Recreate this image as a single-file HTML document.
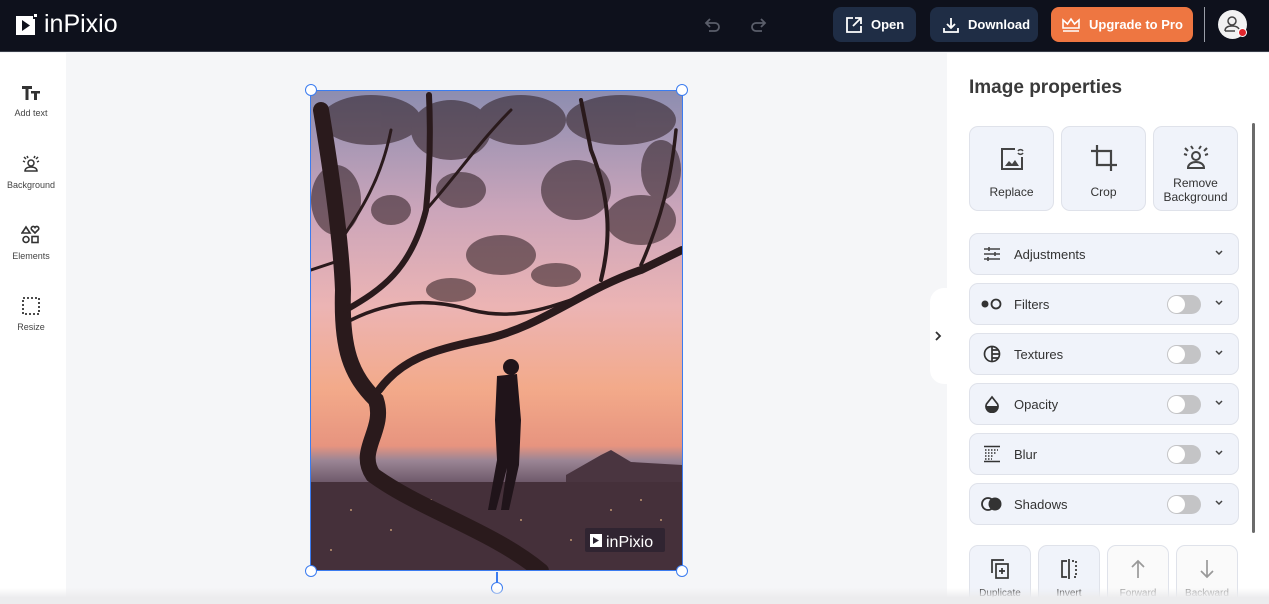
<!DOCTYPE html>
<html><head><meta charset="utf-8"><style>
*{margin:0;padding:0;box-sizing:border-box}
html,body{width:1269px;height:604px;overflow:hidden}
body{font-family:"Liberation Sans",sans-serif;background:#f5f6f8;position:relative}
.hdr{position:absolute;left:0;top:0;width:1269px;height:52px;background:#0e111c;border-bottom:1px solid #3a3f4a}
.logo{position:absolute;left:16px;top:10px;color:#fff;font-size:25px;display:flex;align-items:center;gap:6px}
.btn{position:absolute;top:7px;height:35px;border-radius:8px;color:#fff;font-weight:bold;font-size:13px;display:flex;align-items:center;gap:8px;padding-left:12px}
.side{position:absolute;left:0;top:53px;width:66px;height:551px;background:#fff}
.si{position:absolute;left:0;width:62px;text-align:center;font-size:9px;color:#444}
.si svg{display:block;margin:0 auto 6px}
.panel{position:absolute;left:947px;top:53px;width:322px;height:551px;background:#fff;overflow:hidden}
h1{position:absolute;left:22px;top:24px;font-size:19px;color:#3a3a3a;font-weight:bold}
.card{position:absolute;background:#f0f3fa;border:1px solid #dfe2ea;border-radius:9px}
.tc{top:73px;width:85px;height:85px;text-align:center;font-size:12px;color:#333}
.row{left:22px;width:270px;height:42px;display:flex;align-items:center;font-size:13px;color:#333}
.row .ic{width:44px;display:flex;justify-content:center}
.tog{position:absolute;left:197px;top:11px;width:34px;height:19px;border-radius:10px;background:#c4c4c6}
.tog:after{content:"";position:absolute;left:1px;top:1px;width:17px;height:17px;border-radius:50%;background:#fff}
.chev{position:absolute;left:244px;top:15px}
.bc{top:492px;width:62px;height:70px;text-align:center;font-size:10px;color:#333}
.h{position:absolute;width:12px;height:12px;border:1.5px solid #3b7cf0;border-radius:50%;background:#fff}
</style></head><body>
<div class="hdr">
 <div class="logo"><svg width="22" height="22" viewBox="0 0 22 22"><rect x="0" y="2" width="19" height="19" fill="#fff"/><rect x="17" y="0" width="5" height="5" fill="#0e111c"/><rect x="18" y="0" width="3" height="3" fill="#fff"/><path d="M6 6 L14 11.5 L6 17Z" fill="#0e111c"/></svg><span>inPixio</span></div>
 <svg style="position:absolute;left:703px;top:15px" width="20" height="20" viewBox="0 0 20 20" fill="none" stroke="#5a5e6a" stroke-width="1.8"><path d="M7 4 L3 8 L7 12 M3 8 H12 a4 4 0 0 1 0 8 H6"/></svg>
 <svg style="position:absolute;left:748px;top:15px" width="20" height="20" viewBox="0 0 20 20" fill="none" stroke="#5a5e6a" stroke-width="1.8"><path d="M13 4 L17 8 L13 12 M17 8 H8 a4 4 0 0 0 0 8 H14"/></svg>
 <div class="btn" style="left:833px;width:83px;background:#1f2d45"><svg width="18" height="18" viewBox="0 0 18 18" fill="none" stroke="#fff" stroke-width="1.8"><path d="M8 2H2V16H16V10M10 2H16V8M16 2L8 10"/></svg>Open</div>
 <div class="btn" style="left:930px;width:108px;background:#1f2d45"><svg width="18" height="18" viewBox="0 0 18 18" fill="none" stroke="#fff" stroke-width="1.8"><path d="M9 2V12M5 8L9 12L13 8M2 12V16H16V12"/></svg>Download</div>
 <div class="btn" style="left:1051px;width:142px;background:#ee7641;padding-left:10px"><svg width="20" height="16" viewBox="0 0 20 16" fill="none" stroke="#fff" stroke-width="1.6"><path d="M2 11L2 3L6.5 7L10 2L13.5 7L18 3L18 11Z M2 14H18"/></svg>Upgrade to Pro</div>
 <div style="position:absolute;left:1204px;top:7px;width:1px;height:35px;background:#9a9ea8"></div>
 <div style="position:absolute;left:1218px;top:10px;width:29px;height:29px;border-radius:50%;background:#f2f2f2"><svg width="29" height="29" viewBox="0 0 29 29" fill="none" stroke="#444" stroke-width="1.5"><circle cx="14" cy="11" r="4"/><path d="M7 21c0-4 3-5 7-5s6 1 7 3M7 21H17"/></svg><div style="position:absolute;left:20px;top:18px;width:9px;height:9px;border-radius:50%;background:#e0262c;border:1.5px solid #fff"></div></div>
</div>
<div class="side">
 <div class="si" style="top:31px"><svg width="20" height="18" viewBox="0 0 20 18" fill="#333"><path d="M1 2H11V5H7.5V16H4.5V5H1Z M10 7H19V9.5H16V16H13V9.5H10Z"/></svg>Add text</div>
 <div class="si" style="top:101px"><svg width="20" height="20" viewBox="0 0 20 20" fill="none" stroke="#333" stroke-width="1.5"><circle cx="10" cy="9" r="3"/><path d="M4 17c0-3 3-4 6-4s6 1 6 4Z M3 3l2 2M6 2l1 2M14 2l-1 2M17 3l-2 2M2 7l2 1M18 7l-2 1"/></svg>Background</div>
 <div class="si" style="top:172px"><svg width="20" height="20" viewBox="0 0 20 20" fill="none" stroke="#333" stroke-width="1.6"><path d="M5 2L9 8H1Z M14 8l-3.5-3.5a2 2 0 0 1 3.5-2a2 2 0 0 1 3.5 2Z"/><circle cx="5" cy="14.5" r="3"/><rect x="11" y="11.5" width="6" height="6"/></svg>Elements</div>
 <div class="si" style="top:243px"><svg width="20" height="20" viewBox="0 0 20 20" fill="none" stroke="#333" stroke-width="1.8" stroke-dasharray="2 2"><rect x="2" y="2" width="16" height="16"/></svg>Resize</div>
</div>

<svg style="position:absolute;left:311px;top:90px" width="371" height="481" viewBox="0 0 371 481">
 <defs><linearGradient id="sky" x1="0" y1="0" x2="0" y2="1">
  <stop offset="0" stop-color="#8c8db0"/><stop offset="0.25" stop-color="#cba5ba"/><stop offset="0.45" stop-color="#ecb4b4"/><stop offset="0.62" stop-color="#f3aa8a"/><stop offset="0.74" stop-color="#e7947f"/><stop offset="0.77" stop-color="#9b8595"/><stop offset="0.82" stop-color="#6a5566"/><stop offset="1" stop-color="#3a2630"/></linearGradient></defs>
 <rect width="371" height="481" fill="url(#sky)"/>
 <path d="M255 385 L290 365 L300 360 L320 372 L371 375 L371 400 L255 400Z" fill="#4a3540"/>
 <rect x="0" y="392" width="371" height="89" fill="#45303a"/>
 <g fill="#f3c28a" opacity="0.7"><circle cx="40" cy="420" r="1"/><circle cx="80" cy="440" r="1"/><circle cx="120" cy="410" r="1"/><circle cx="300" cy="420" r="1"/><circle cx="330" cy="410" r="1"/><circle cx="260" cy="450" r="1"/><circle cx="350" cy="430" r="1"/><circle cx="20" cy="460" r="1"/><circle cx="210" cy="430" r="1"/></g>
 <g fill="#2a1a1e" opacity="0.55">
  <ellipse cx="60" cy="30" rx="50" ry="25"/><ellipse cx="140" cy="40" rx="40" ry="30"/><ellipse cx="210" cy="30" rx="45" ry="25"/><ellipse cx="310" cy="30" rx="55" ry="25"/>
  <ellipse cx="265" cy="100" rx="35" ry="30"/><ellipse cx="330" cy="130" rx="35" ry="25"/><ellipse cx="190" cy="165" rx="35" ry="20"/>
  <ellipse cx="140" cy="200" rx="25" ry="12"/><ellipse cx="25" cy="110" rx="25" ry="35"/><ellipse cx="150" cy="100" rx="25" ry="18"/>
  <ellipse cx="245" cy="185" rx="25" ry="12"/><ellipse cx="350" cy="80" rx="20" ry="30"/><ellipse cx="80" cy="120" rx="20" ry="15"/>
 </g>
 <g fill="none" stroke="#2a1a1c" stroke-linecap="round">
  <path d="M230 481 C180 440 110 420 62 385 C45 360 75 340 65 310 C40 285 30 260 32 200 C30 150 20 80 10 20" stroke-width="16"/>
  <path d="M68 300 C90 270 120 260 170 250 C230 238 270 200 330 180 L371 160" stroke-width="8"/>
  <path d="M35 220 C70 200 100 180 115 120 C118 90 120 50 118 5" stroke-width="6"/>
  <path d="M40 230 C70 215 110 205 160 220 C200 230 230 220 260 210" stroke-width="3.5"/>
  <path d="M290 190 C300 150 300 110 280 60 L270 10" stroke-width="4"/>
  <path d="M330 175 C350 130 360 90 365 40" stroke-width="3.5"/>
  <path d="M115 120 C150 80 170 50 200 20" stroke-width="3"/>
  <path d="M30 150 C50 120 70 90 80 40" stroke-width="3"/>
  <path d="M30 170 L0 180" stroke-width="3"/>
 </g>
 <g fill="#20141a"><circle cx="200" cy="277" r="8"/><path d="M186 286 L206 284 L210 330 L208 375 L198 420 L190 420 L196 378 L185 420 L177 420 L186 370 L184 330Z"/></g>
 <rect x="274" y="438" width="80" height="24" rx="2" fill="#2a2230" opacity="0.8"/>
 <rect x="279" y="444" width="12" height="13" fill="#fff"/><path d="M282 447 L288 450.5 L282 454Z" fill="#2a2230"/>
 <text x="295" y="457" fill="#fff" font-size="16" font-family="Liberation Sans">inPixio</text>
</svg>
<div style="position:absolute;left:310px;top:90px;width:373px;height:481px;border:1.5px solid #3b7cf0"></div>
<div class="h" style="left:305px;top:84px"></div><div class="h" style="left:676px;top:84px"></div>
<div class="h" style="left:305px;top:565px"></div><div class="h" style="left:676px;top:565px"></div>
<div style="position:absolute;left:496px;top:572px;width:1.5px;height:11px;background:#3b7cf0"></div>
<div class="h" style="left:491px;top:582px"></div>

<div style="position:absolute;left:930px;top:288px;width:24px;height:96px;background:#fff;border-radius:14px 0 0 14px"></div>
<svg style="position:absolute;left:933px;top:330px" width="10" height="12" viewBox="0 0 10 12" fill="none" stroke="#333" stroke-width="1.8"><path d="M3 2L7 6L3 10"/></svg>
<div class="panel">
 <h1>Image properties</h1>
 <div style="position:absolute;left:305px;top:70px;width:3px;height:410px;background:#6b6b6b;border-radius:2px"></div>
 <div class="card tc" style="left:22px"><svg style="margin:18px auto 12px;display:block" width="28" height="28" viewBox="0 0 28 28" fill="none" stroke="#444" stroke-width="2"><path d="M17 4H4V24H24V12"/><path d="M7 21L11 16L14 19L17 15L21 21Z" fill="#444" stroke="none"/><path d="M20 6a3 3 0 0 1 5 0M25 8a3 3 0 0 1-5 0" stroke-width="1.5"/></svg>Replace</div>
 <div class="card tc" style="left:114px"><svg style="margin:16px auto 12px;display:block" width="30" height="30" viewBox="0 0 30 30" fill="none" stroke="#444" stroke-width="2.2"><path d="M8 2V22H28M2 8H22V28"/></svg>Crop</div>
 <div class="card tc" style="left:206px;line-height:14px"><svg style="margin:17px auto 4px;display:block" width="28" height="28" viewBox="0 0 28 28" fill="none" stroke="#444" stroke-width="2"><circle cx="14" cy="12" r="4"/><path d="M6 24c0-4 4-6 8-6s8 2 8 6Z M3 4l3 3M9 2l2 3M19 2l-2 3M25 4l-3 3M2 10l3 1M26 10l-3 1"/></svg>Remove<br>Background</div>

 <div class="card row" style="top:180px"><span class="ic"><svg width="18" height="16" viewBox="0 0 18 16" fill="none" stroke="#444" stroke-width="1.6"><path d="M1 3H17M1 8H17M1 13H17M6 1V5M12 6V10M5 11V15"/></svg></span>Adjustments<svg class="chev" width="10" height="8" viewBox="0 0 10 8" fill="none" stroke="#444" stroke-width="1.5"><path d="M2 2L5 5L8 2"/></svg></div>
 <div class="card row" style="top:230px"><span class="ic"><svg width="22" height="12" viewBox="0 0 22 12"><circle cx="4" cy="6" r="3.5" fill="#333"/><circle cx="15" cy="6" r="4.5" fill="none" stroke="#333" stroke-width="1.8"/></svg></span>Filters<div class="tog"></div><svg class="chev" width="10" height="8" viewBox="0 0 10 8" fill="none" stroke="#444" stroke-width="1.5"><path d="M2 2L5 5L8 2"/></svg></div>
 <div class="card row" style="top:280px"><span class="ic"><svg width="18" height="18" viewBox="0 0 18 18" fill="none" stroke="#333" stroke-width="1.7"><circle cx="9" cy="9" r="7.5"/><path d="M9 1.5V16.5M9 5H15M9 9H16.5M9 13H15"/></svg></span>Textures<div class="tog"></div><svg class="chev" width="10" height="8" viewBox="0 0 10 8" fill="none" stroke="#444" stroke-width="1.5"><path d="M2 2L5 5L8 2"/></svg></div>
 <div class="card row" style="top:330px"><span class="ic"><svg width="16" height="18" viewBox="0 0 16 18"><path d="M8 2L2.5 9a6 6 0 1 0 11 0Z" fill="none" stroke="#333" stroke-width="1.7"/><path d="M2 11H14a6 6 0 0 1-12 0Z" fill="#333"/></svg></span>Opacity<div class="tog"></div><svg class="chev" width="10" height="8" viewBox="0 0 10 8" fill="none" stroke="#444" stroke-width="1.5"><path d="M2 2L5 5L8 2"/></svg></div>
 <div class="card row" style="top:380px"><span class="ic"><svg width="18" height="18" viewBox="0 0 18 18" fill="none" stroke="#333" stroke-width="1.5"><path d="M1 1.5H17M1 16.5H17"/><path d="M2 5H15M2 8H13M2 11H11M2 14H9" stroke-dasharray="1.5 1.5"/></svg></span>Blur<div class="tog"></div><svg class="chev" width="10" height="8" viewBox="0 0 10 8" fill="none" stroke="#444" stroke-width="1.5"><path d="M2 2L5 5L8 2"/></svg></div>
 <div class="card row" style="top:430px"><span class="ic"><svg width="22" height="16" viewBox="0 0 22 16"><circle cx="7" cy="8" r="6" fill="none" stroke="#333" stroke-width="1.8"/><circle cx="14" cy="8" r="6.5" fill="#333"/></svg></span>Shadows<div class="tog"></div><svg class="chev" width="10" height="8" viewBox="0 0 10 8" fill="none" stroke="#444" stroke-width="1.5"><path d="M2 2L5 5L8 2"/></svg></div>

 <div class="card bc" style="left:22px"><svg style="margin:12px auto 8px;display:block" width="20" height="22" viewBox="0 0 20 22" fill="none" stroke="#333" stroke-width="1.7"><path d="M2 15V2H14"/><rect x="6" y="6" width="12" height="14"/><path d="M12 10V16M9 13H15"/></svg>Duplicate</div>
 <div class="card bc" style="left:91px"><svg style="margin:12px auto 8px;display:block" width="20" height="22" viewBox="0 0 20 22" fill="none" stroke="#333" stroke-width="1.7"><path d="M8 3H3V19H8M10 1V21"/><path d="M13 3H17V19H13" stroke-dasharray="2 2"/></svg>Invert</div>
 <div class="card bc" style="left:160px;background:#fafafa;color:#999"><svg style="margin:12px auto 8px;display:block" width="20" height="22" viewBox="0 0 20 22" fill="none" stroke="#999" stroke-width="1.7"><path d="M10 20V3M4 9L10 3L16 9"/></svg>Forward</div>
 <div class="card bc" style="left:229px;background:#fafafa;color:#999"><svg style="margin:12px auto 8px;display:block" width="20" height="22" viewBox="0 0 20 22" fill="none" stroke="#999" stroke-width="1.7"><path d="M10 2V19M4 13L10 19L16 13"/></svg>Backward</div>
</div>
<div style="position:absolute;left:0;top:588px;width:1269px;height:16px;background:linear-gradient(rgba(240,240,242,0),rgba(236,236,238,1) 60%)"></div>
</body></html>
